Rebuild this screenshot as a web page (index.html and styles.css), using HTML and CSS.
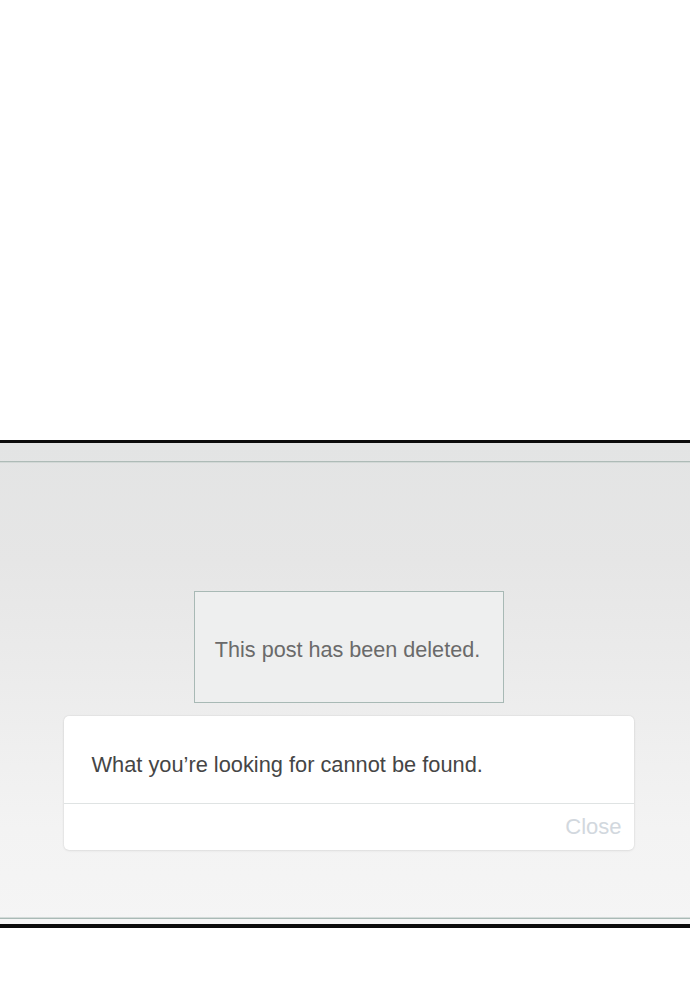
FILE: index.html
```html
<!DOCTYPE html>
<html>
<head>
<meta charset="utf-8">
<link rel="stylesheet" href="styles.css">
</head>
<body>
<div class="top"></div>
<div class="panel">
  <div class="panel-rule"></div>
  <div class="panel-body">
    <div class="deleted">This post has been deleted.</div>
    <div class="dialog">
      <div class="dialog-msg">What you’re looking for cannot be found.</div>
      <div class="dialog-foot"><span class="close">Close</span></div>
    </div>
  </div>
  <div class="panel-rule bottom-rule"></div>
</div>
<div class="after"></div>
</body>
</html>
```
FILE: styles.css
```css
html, body {
  margin: 0;
  padding: 0;
  background: #ffffff;
  font-family: "Liberation Sans", Arial, sans-serif;
}
.top {
  height: 440px;
  background: #ffffff;
}
.panel {
  border-top: 3px solid #0b0b0b;
  border-bottom: 4px solid #0b0b0b;
  background: linear-gradient(#e3e4e4, #e6e6e6 25%, #f3f3f3 80%, #f5f5f5);
  display: flex;
  flex-direction: column;
  height: 481px;
}
.panel-rule {
  margin-top: 18px;
  height: 1px;
  background: #aebbb7;
  box-shadow: 0 1px 0 #d2d8d6;
}
.panel-body {
  flex: 1;
  display: flex;
  flex-direction: column;
  align-items: center;
  padding-top: 129px;
  padding-left: 7px;
}
.deleted {
  box-sizing: border-box;
  width: 310px;
  height: 112px;
  border: 1px solid #a8b9b5;
  background: #eeefef;
  color: #6a6a6a;
  font-size: 21.6px;
  display: flex;
  align-items: center;
  justify-content: center;
  padding-top: 5px;
  padding-right: 2px;
}
.dialog {
  margin-top: 13px;
  width: 570px;
  background: #ffffff;
  border-radius: 5px;
  box-shadow: 0 0 2px rgba(0,0,0,0.12), 0 1px 3px rgba(0,0,0,0.06);
  display: flex;
  flex-direction: column;
}
.dialog-msg {
  height: 88px;
  box-sizing: border-box;
  padding: 36px 0 0 28px;
  font-size: 21.8px;
  color: #454545;
  border-bottom: 1px solid #dfe3e3;
}
.dialog-foot {
  height: 46px;
  display: flex;
  justify-content: flex-end;
  align-items: center;
  padding-right: 12px;
}
.close {
  color: #d2d8de;
  font-size: 22px;
}
.bottom-rule {
  margin-top: 0;
  margin-bottom: 5px;
  background: #a9bab6;
  box-shadow: 0 -1px 0 #d4dbd9;
}
.after {
  height: 80px;
  background: #ffffff;
}
```
